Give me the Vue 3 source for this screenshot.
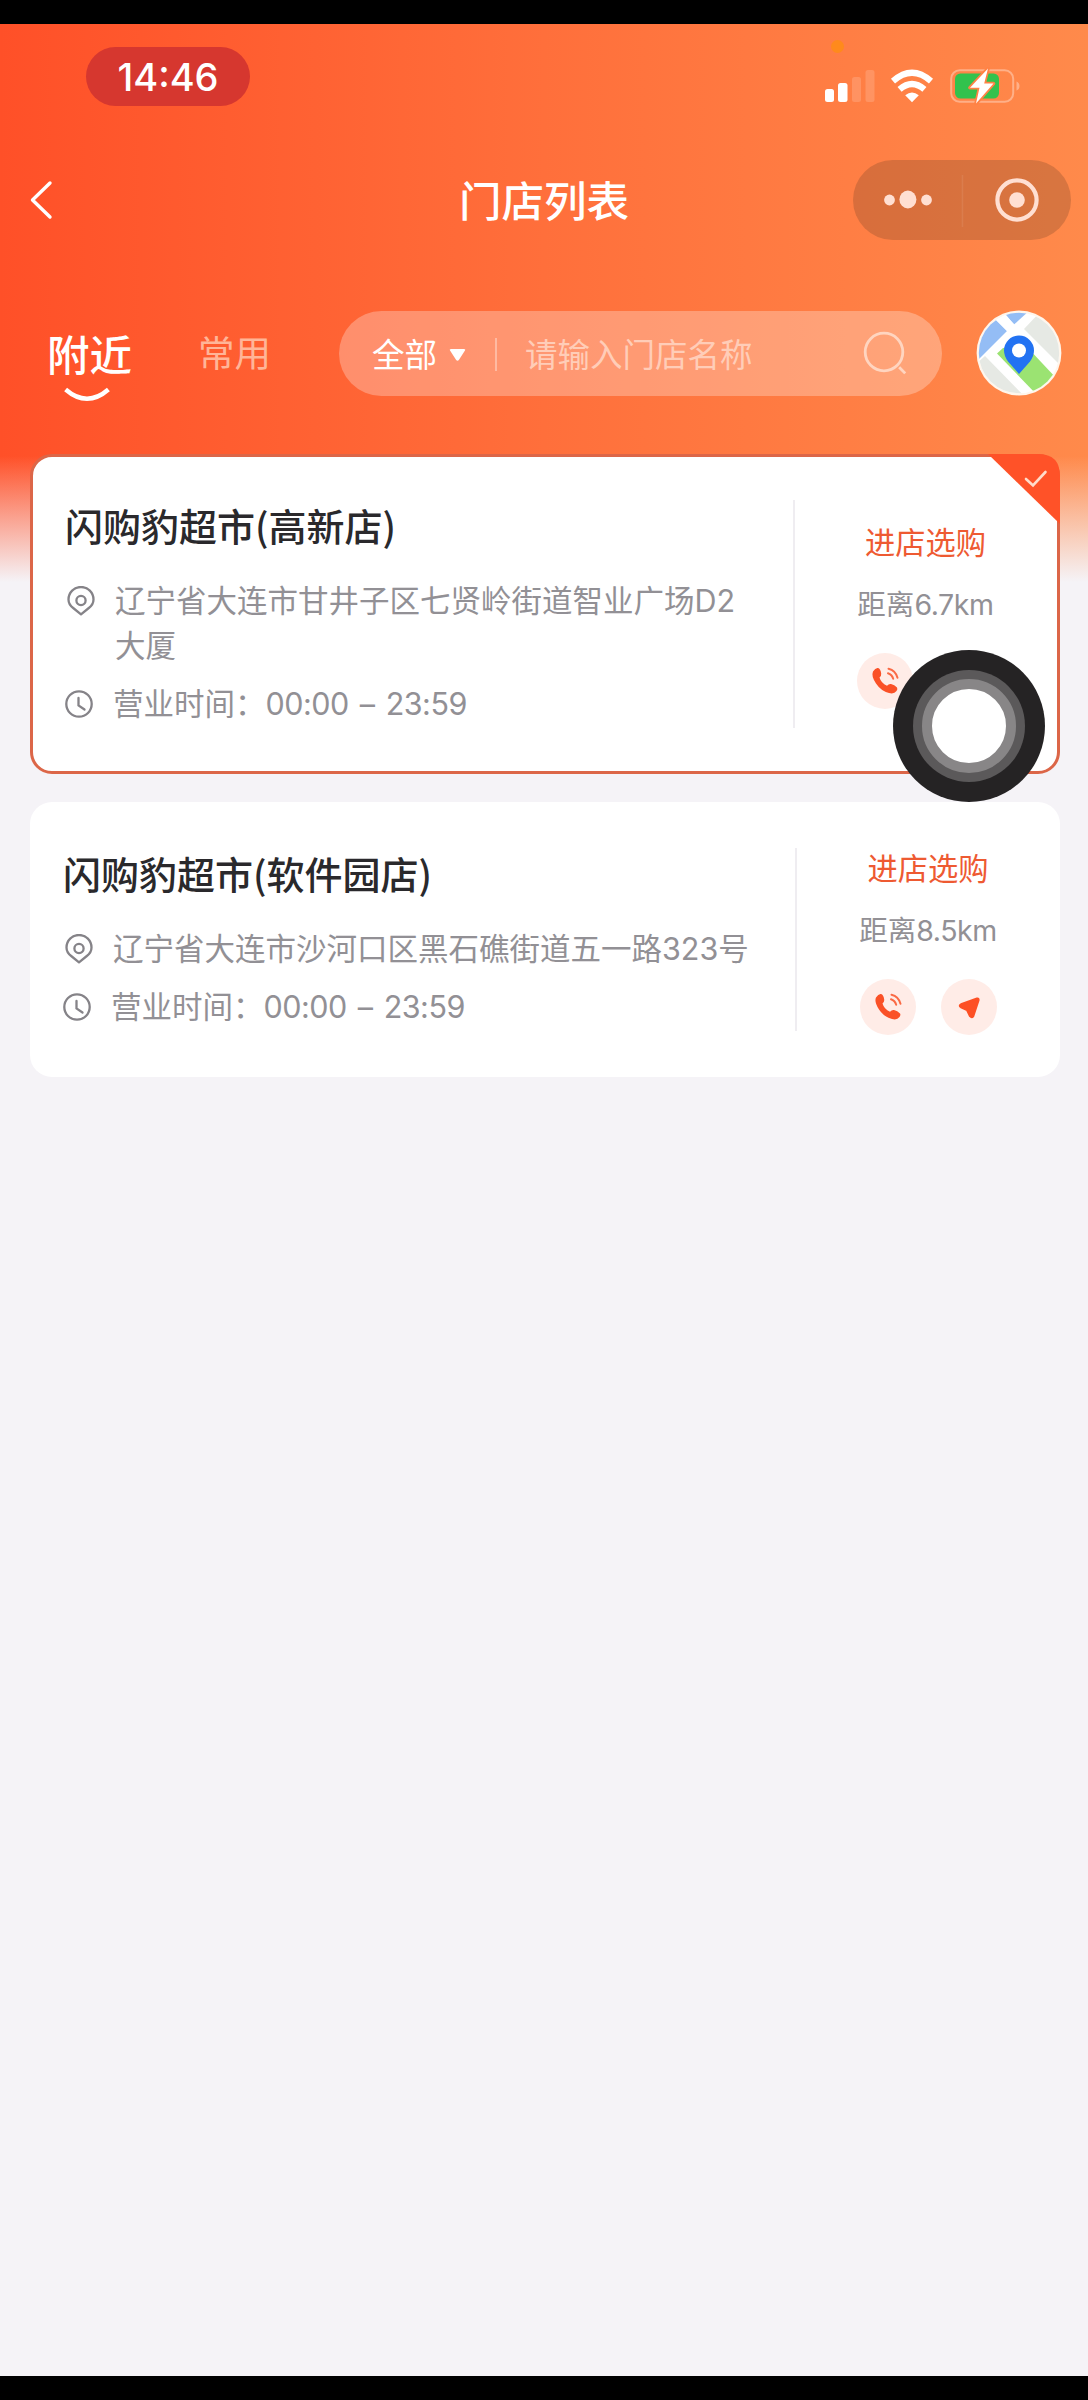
<script setup>
const stores = [
  {
    name: '闪购豹超市(高新店)',
    address: ['辽宁省大连市甘井子区七贤岭街道智业广场D2', '大厦'],
    open: '00:00',
    close: '23:59',
    distance: '6.7km',
    selected: true,
  },
  {
    name: '闪购豹超市(软件园店)',
    address: ['辽宁省大连市沙河口区黑石礁街道五一路323号'],
    open: '00:00',
    close: '23:59',
    distance: '8.5km',
    selected: false,
  },
]
</script>

<template>
  <div class="screen">
    <div class="bezel"></div>
    <main class="page">
      <div class="status">
        <span class="time">14:46</span>
        <div class="signals">
          <i class="mic-dot"></i>
          <svg class="cell" width="50" height="34" viewBox="0 0 50 34">
            <rect x="0" y="20" width="9" height="13" rx="2.5" fill="#fff" />
            <rect x="13" y="14" width="9.5" height="19" rx="2.5" fill="#fff" />
            <rect x="27" y="8" width="9" height="25" rx="2.5" fill="#fff" opacity=".16" />
            <rect x="40.5" y="1" width="9" height="32" rx="2.5" fill="#fff" opacity=".16" />
          </svg>
          <svg class="wifi" width="44" height="34" viewBox="0 0 44 34" fill="none" stroke="#fff" stroke-width="6.2">
            <path d="M3 12.2Q22-4.5 41 12.2" />
            <path d="M9.6 20.4Q22 9.5 34.4 20.4" />
            <path d="M22 33.2L15.2 26.2Q22 20.8 28.8 26.2Z" fill="#fff" stroke="none" />
          </svg>
          <svg class="battery" width="72" height="38" viewBox="0 0 72 38">
            <rect x="1.2" y="3.2" width="62" height="31.6" rx="8.5" fill="none" stroke="#fff" stroke-opacity=".35" stroke-width="2" />
            <path d="M66.5 14.5q3 1 3 4.5t-3 4.5z" fill="#fff" opacity=".35" />
            <rect x="5" y="6.5" width="44" height="25" rx="5.5" fill="#32c24d" />
            <path d="M38 1.5L20 20.800h9.5L26 36.5L43.5 16.600H34.2z" fill="#fff" stroke="#ff8245" stroke-width="3.5" paint-order="stroke" stroke-linejoin="round" />
          </svg>
        </div>
      </div>

      <header class="nav">
        <svg class="back" width="26" height="42" viewBox="0 0 26 42" fill="none" stroke="#fff" stroke-width="3.4" stroke-linecap="round" stroke-linejoin="round">
          <path d="M21 4L3.5 21L21 38" />
        </svg>
        <h1>门店列表</h1>
        <div class="capsule">
          <svg width="218" height="80" viewBox="0 0 218 80">
            <g fill="#ffdfd2">
              <circle cx="36.5" cy="40" r="5.4" />
              <ellipse cx="54.9" cy="39.5" rx="8.5" ry="9" />
              <circle cx="73.5" cy="40" r="5.4" />
              <circle cx="164" cy="40" r="7.8" />
            </g>
            <rect x="108.7" y="15" width="1.5" height="52" fill="#fff" opacity=".08" />
            <circle cx="164" cy="40" r="19.6" fill="none" stroke="#ffdfd2" stroke-width="4.2" />
          </svg>
        </div>
      </header>

      <div class="filters">
        <div class="tab active">
          附近
          <svg class="smile" width="48" height="18" viewBox="0 0 48 18" fill="none" stroke="#fff" stroke-width="4.4">
            <path d="M2.6 3.5Q24 22 45.4 3.5" />
          </svg>
        </div>
        <div class="tab">常用</div>
        <div class="search">
          <span class="scope">全部</span>
          <svg class="caret" width="17" height="14" viewBox="0 0 17 14" fill="#fff">
            <path d="M2 1h13q2 0 .8 1.700l-5.800 9q-1.500 2-3 0l-5.800-9Q0 1 2 1z" />
          </svg>
          <i class="bar"></i>
          <span class="placeholder">请输入门店名称</span>
          <svg class="glass" width="46" height="46" viewBox="0 0 46 46" fill="none" stroke="#ffd5c0" stroke-width="2.8">
            <circle cx="22" cy="22" r="18.8" />
            <path d="M37.2 37.2l6 6.2" />
          </svg>
        </div>
        <svg class="map" width="86" height="86" viewBox="0 0 86 86">
          <defs>
            <clipPath id="mapDisc"><circle cx="43" cy="43" r="40.2" /></clipPath>
          </defs>
          <circle cx="43" cy="43" r="42.4" fill="#fff6ec" />
          <g clip-path="url(#mapDisc)">
            <rect width="86" height="86" fill="#fff" />
            <path d="M0 0L10 0L31 21L0 52z" fill="#94bdf5" />
            <path d="M26 0H54L38 14.500z" fill="#94bdf5" />
            <path d="M10 0L32 22L39 15L24 0z" fill="#fff" />
            <path d="M66 0L48 19L90 61V0z" fill="#e6e9e4" />
            <path d="M0 54L9 46L52 90H0z" fill="#e6e9e4" />
            <path d="M27 38L21 43.500L62 86L82 70L50 36z" fill="#9be372" />
          </g>
          <path d="M43 64L32 51.500Q28 46 28 40.500a15 15 0 0 1 30 0Q58 46 54 51.500z" fill="#2272f2" />
          <circle cx="43" cy="40.5" r="7" fill="#fff" />
        </svg>
      </div>

      <section class="stores">
        <article v-for="s in stores" :key="s.name" class="store" :class="{ selected: s.selected }">
          <div class="info">
            <h2>{{ s.name }}</h2>
            <div class="row">
              <svg width="28" height="30" viewBox="0 0 28 30" fill="none" stroke="#858388" stroke-width="2.3">
                <path d="M14 28.300L6.200 22Q1.500 18.500 1.500 13.500a12.500 12.500 0 0 1 25 0Q26.500 18.500 21.800 22z" stroke-linejoin="round" />
                <circle cx="14" cy="14.5" r="4.6" />
              </svg>
              <p><span v-for="line in s.address" :key="line">{{ line }}</span></p>
            </div>
            <div class="row hours">
              <svg width="28" height="30" viewBox="0 0 28 30" fill="none" stroke="#858388" stroke-width="2.3">
                <circle cx="14" cy="15" r="12.7" />
                <path d="M13.500 9v7.500l6 4" stroke-linecap="round" />
              </svg>
              <p>营业时间：<b>{{ s.open }} – {{ s.close }}</b></p>
            </div>
          </div>
          <div class="actions">
            <a>进店选购</a>
            <span class="distance">距离<b>{{ s.distance }}</b></span>
            <div class="buttons">
              <span class="round">
                <svg width="28" height="28" viewBox="0 0 28 28">
                  <path d="M2 4.500Q4.500 .5 7 1q2.500 .5 3.200 5.500Q10.500 9 8.500 10.500q1.500 5.500 7.500 8.200 2-2.200 4-1.700 3.500 .8 6 3.500 1 1.500-.5 3.500-2.500 3.500-7.500 2Q10 24 5 16.500 0 9 2 4.500z" fill="#fa5127" />
                  <path d="M17 6.200q4 1.300 5.200 5.500M17.500 1.800q7 1.700 9 9" fill="none" stroke="#fa6a45" stroke-width="2" stroke-linecap="round" />
                </svg>
              </span>
              <span class="round">
                <svg width="24" height="24" viewBox="0 0 24 24">
                  <path d="M20 3.500L4 9.300Q1.500 10.500 4 12.300l6 2.700 3 6.200q1.800 2.200 3.300 0L21.500 5.500Q22 3 20 3.500z" fill="#fd5025" stroke="#fd5025" stroke-width="2" stroke-linejoin="round" />
                </svg>
              </span>
            </div>
          </div>
          <svg v-if="s.selected" class="corner" width="72" height="70" viewBox="0 0 72 70">
            <path d="M0 0H50Q72 0 72 22V70z" fill="#ff5228" />
            <path d="M38 25l7 6.500L57.500 18" fill="none" stroke="#ffdccb" stroke-width="2.6" stroke-linecap="round" />
          </svg>
        </article>
      </section>
      <i class="touch"></i>
    </main>
    <div class="bezel"></div>
  </div>
</template>

<style>
body {
  margin: 0;
}
</style>

<style scoped>
.screen {
  width: 1088px;
  height: 2400px;
  display: flex;
  flex-direction: column;
  overflow: hidden;
  background: #f5f3f7;
  font-family: 'Noto Sans CJK SC', sans-serif;
}
.bezel {
  height: 24px;
  flex: none;
  background: #000;
}
svg {
  display: block;
  flex: none;
}
.page {
  position: relative;
  flex: 1;
  box-sizing: border-box;
  background:
    linear-gradient(180deg, rgba(245, 243, 247, 0) 432px, rgba(245, 243, 247, 0.5) 494px, #f5f3f7 558px),
    linear-gradient(90deg, #ff5028, #ff6f3b 50%, #ff8a4b);
}
.status {
  display: flex;
  justify-content: space-between;
  height: 112px;
  padding: 23px 66px 0 86px;
  box-sizing: border-box;
}
.time {
  width: 164px;
  height: 59px;
  border-radius: 30px;
  background: #d6372f;
  color: #fff;
  font: 500 38px/60px Inter, sans-serif;
  text-align: center;
}
.signals {
  position: relative;
  display: flex;
  align-items: flex-start;
  padding-top: 22px;
}
.mic-dot {
  position: absolute;
  left: 6px;
  top: -7px;
  width: 13px;
  height: 13px;
  border-radius: 50%;
  background: #ff8a1c;
}
.wifi {
  margin-left: 15px;
}
.battery {
  margin: -2px 0 0 16px;
}
.nav {
  display: flex;
  align-items: center;
  height: 127px;
  padding: 0 17px 0 29px;
}
h1 {
  flex: 1;
  margin: -2px 0 0 404px;
  color: #fff;
  font-size: 42.5px;
  font-weight: 500;
  line-height: 60px;
}
.capsule {
  width: 218px;
  height: 80px;
  border-radius: 40px;
  background: rgba(100, 60, 35, 0.25);
}
.filters {
  display: flex;
  align-items: center;
  height: 180px;
  padding: 0 26px 0 47px;
  box-sizing: border-box;
}
.tab {
  position: relative;
  width: 74px;
  margin-top: -2px;
  font-size: 36.5px;
  line-height: 60px;
  color: #ffb598;
}
.tab.active {
  width: 151px;
  margin-top: 0;
  font-size: 42.5px;
  font-weight: 500;
  color: #fff;
}
.smile {
  position: absolute;
  left: 16px;
  top: 63px;
}
.search {
  display: flex;
  align-items: center;
  width: 603px;
  height: 85px;
  margin-left: 67px;
  padding: 0 34px 0 33px;
  box-sizing: border-box;
  border-radius: 43px;
  background: rgba(255, 255, 255, 0.28);
  font-size: 32.5px;
  color: #fff;
}
.scope,
.placeholder {
  margin-top: -2px;
}
.caret {
  margin: 4px 0 0 12px;
}
.bar {
  width: 2px;
  height: 33px;
  margin: 2px 28px 0 29px;
  background: rgba(255, 255, 255, 0.35);
}
.placeholder {
  flex: 1;
  color: #ffcdb8;
}
.map {
  margin-left: 34px;
}
.stores {
  display: flex;
  flex-direction: column;
  gap: 28px;
  padding: 11px 28px 0 30px;
}
.store {
  position: relative;
  display: flex;
  box-sizing: border-box;
  padding: 46px 0 46px 33px;
  border-radius: 22px;
  background: #fff;
}
.store.selected {
  padding: 43px 0 43px 32px;
  border: 3px solid #dc6648;
}
.info {
  width: 732px;
  border-right: 2px solid #efedf1;
}
.selected .info {
  width: 728px;
}
h2 {
  margin: 0;
  font-size: 38px;
  font-weight: 500;
  line-height: 50px;
  color: #2a292c;
}
.row {
  display: flex;
  margin: 28px 0 0 2px;
}
.row svg {
  margin-top: 8px;
}
.hours {
  margin: 13px 0 2px;
}
.row p {
  margin: 0 0 0 20px;
  font-size: 30.5px;
  line-height: 45px;
  color: #929095;
  font-family: Inter, 'Noto Sans CJK SC', sans-serif;
}
.row p span {
  display: block;
  white-space: nowrap;
}
.row b {
  font-weight: inherit;
  letter-spacing: -0.5px;
  word-spacing: 3px;
}
.actions {
  flex: 1;
  display: flex;
  flex-direction: column;
  align-items: center;
  justify-content: center;
  line-height: 40px;
  margin: -9px 0 -11px;
  padding-right: 1px;
}
.actions a {
  font-size: 30.3px;
  color: #ee5a32;
}
.distance {
  margin-top: 22px;
  font-size: 28.5px;
  color: #929095;
}
.distance b {
  font-family: Inter, sans-serif;
  font-weight: inherit;
  letter-spacing: -0.4px;
}
.buttons {
  display: flex;
  gap: 25px;
  margin-top: 28px;
}
.round {
  display: flex;
  align-items: center;
  justify-content: center;
  width: 56px;
  height: 56px;
  border-radius: 50%;
  background: #ffece7;
}
.corner {
  position: absolute;
  right: -3px;
  top: -3px;
}
.touch {
  position: absolute;
  left: 922px;
  top: 655px;
  width: 74px;
  height: 74px;
  border: 10px solid #888687;
  border-radius: 50%;
  background: #fff;
  box-shadow: 0 0 0 9px #5b595a, 0 0 0 29px #252324;
}
</style>
